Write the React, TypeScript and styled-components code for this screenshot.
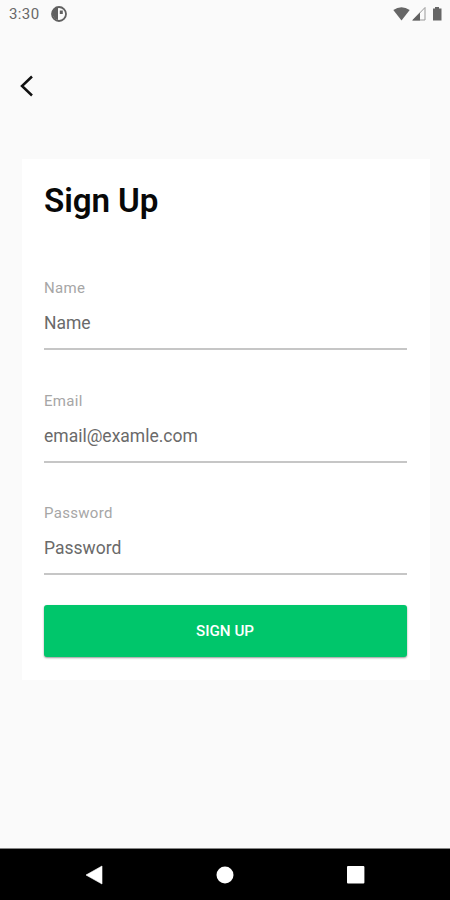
import React from 'react';
import styled, { createGlobalStyle } from 'styled-components';

const Global = createGlobalStyle`
  * { box-sizing: border-box; }
  body { margin: 0; background: #fafafa; font-family: Roboto, sans-serif; }
`;
const Screen = styled.div`
  width: 450px;
  height: 900px;
  display: flex;
  flex-direction: column;
  background: #fafafa;
  overflow: hidden;
`;
const StatusBar = styled.header`
  height: 30px;
  display: flex;
  align-items: flex-start;
  justify-content: space-between;
  padding: 5px 8px 0 9px;
  color: #686868;
`;
const StatusGroup = styled.div<{ $gap: number }>`
  display: flex;
  align-items: center;
  gap: ${(p) => p.$gap}px;
  height: 18px;
`;
const Clock = styled.span`
  font-size: 15px;
  line-height: 18px;
  letter-spacing: 0.4px;
`;
const TopBar = styled.nav`
  height: 129px;
  padding: 44px 0 0 18px;
`;
const BackButton = styled.button`
  display: flex;
  border: 0;
  padding: 0;
  background: none;
`;
const Card = styled.form`
  margin: 0 20px 0 22px;
  height: 521px;
  padding: 22px 23px 0 22px;
  background: #fff;
  display: flex;
  flex-direction: column;
`;
const Title = styled.h1`
  margin: 0 0 57.4px;
  font-size: 33.2px;
  line-height: 40px;
  font-weight: 600;
  letter-spacing: -0.1px;
  color: #080808;
`;
const Fields = styled.div`
  display: flex;
  flex-direction: column;
  gap: 40.3px;
  margin-bottom: 30px;
`;
const Field = styled.label`
  display: block;
  height: 72px;
`;
const FieldName = styled.span`
  display: block;
  font-size: 15px;
  line-height: 20px;
  letter-spacing: 0.3px;
  color: #a6a6a6;
`;
const Input = styled.input`
  display: block;
  width: 100%;
  height: 52px;
  padding: 0;
  border: 0;
  border-bottom: 2px solid #c6c6c6;
  background: none;
  outline: none;
  font: 17.5px Roboto, sans-serif;
  &::placeholder { color: #6a6a6a; opacity: 1; }
`;
const Submit = styled.button`
  height: 52px;
  flex-shrink: 0;
  padding: 1px 7px 0 6px;
  border: 0;
  border-radius: 3px;
  background: #00c66b;
  color: #fff;
  font: 500 15.2px Roboto, sans-serif;
  box-shadow: 0 1px 2px rgba(0, 0, 0, 0.4);
`;
const NavBar = styled.footer`
  height: 52px;
  margin-top: auto;
  padding: 0 85px;
  display: flex;
  justify-content: space-between;
  align-items: center;
  border-top: 1px solid #858585;
  background: #000;
`;

const fields = [
  { name: 'Name', hint: 'Name' },
  { name: 'Email', hint: 'email@examle.com' },
  { name: 'Password', hint: 'Password' },
];

export default function App() {
  return (
    <Screen>
      <Global />
      <StatusBar>
        <StatusGroup $gap={11}>
          <Clock>3:30</Clock>
          <svg width="16" height="16" viewBox="0 0 16 16">
            <circle cx="8" cy="8" r="7" fill="none" stroke="#606060" strokeWidth="1.800" />
            <path d="M2 4 5 2H7V14L4 13 2 10ZM8.800 4.500h3v3.500h-3z" fill="#606060" />
          </svg>
        </StatusGroup>
        <StatusGroup $gap={1.5}>
          <svg width="17" height="16" viewBox="0 0 17 16"><path d="M.3 4Q8.500-1.500 16.700 4L8.500 14.500Z" fill="#666" /></svg>
          <svg width="14" height="16" viewBox="0 0 14 16">
            <path d="M1 14 13 1.500V14Z" fill="none" stroke="#999" />
            <path d="M0 14.500 8 6.500V14.500Z" fill="#606060" />
          </svg>
          <svg width="15" height="16" viewBox="0 0 15 16"><path d="M6 2.500h2V1h4v1.500h2.500V14.500H6Z" fill="#666" /></svg>
        </StatusGroup>
      </StatusBar>
      <TopBar>
        <BackButton type="button" aria-label="Back">
          <svg width="18" height="24" viewBox="0 0 18 24" fill="none" stroke="#111" strokeWidth="2.500"><path d="M14 2.500 4 12l10 9.500" /></svg>
        </BackButton>
      </TopBar>
      <Card>
        <Title>Sign Up</Title>
        <Fields>
          {fields.map((f) => (
            <Field key={f.name}>
              <FieldName>{f.name}</FieldName>
              <Input placeholder={f.hint} />
            </Field>
          ))}
        </Fields>
        <Submit type="button">SIGN UP</Submit>
      </Card>
      <NavBar>
        <svg width="18" height="20" viewBox="0 0 18 20"><path d="M17 1v18L1 10z" fill="#fff" stroke="#fff" strokeWidth=".6" strokeLinejoin="round" /></svg>
        <svg width="18" height="18" viewBox="0 0 18 18"><circle cx="9" cy="9" r="8.500" fill="#fff" /></svg>
        <svg width="18" height="18" viewBox="0 0 18 18"><rect x="0" y="0" width="17.400" height="17.400" rx="1" fill="#fff" /></svg>
      </NavBar>
    </Screen>
  );
}
